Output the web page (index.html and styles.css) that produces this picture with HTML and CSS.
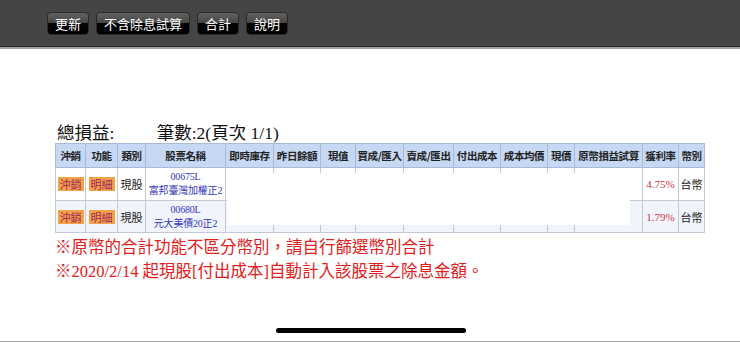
FILE: index.html
```html
<!DOCTYPE html>
<html lang="zh-TW">
<head>
    <meta charset="UTF-8">
    <meta name="viewport" content="width=device-width, initial-scale=1.0">
    <title>損益試算</title>
    <link rel="stylesheet" href="styles.css">
</head>
<body>
    <div class="toolbar">
        <button class="btn-tool">更新</button>
        <button class="btn-tool">不含除息試算</button>
        <button class="btn-tool">合計</button>
        <button class="btn-tool">說明</button>
    </div>

    <div class="content">
        <div class="summary">
            <span class="total">總損益:</span>
            <span class="count">筆數:2(頁次 1/1)</span>
        </div>

        <div class="table-wrap">
            <table class="grid">
                <thead>
                    <tr>
                        <th class="c1">沖銷</th>
                        <th class="c2">功能</th>
                        <th class="c3">類別</th>
                        <th class="c4">股票名稱</th>
                        <th class="c5">即時庫存</th>
                        <th class="c6">昨日餘額</th>
                        <th class="c7">現值</th>
                        <th class="c8">買成/匯入</th>
                        <th class="c9">賣成/匯出</th>
                        <th class="c10">付出成本</th>
                        <th class="c11">成本均價</th>
                        <th class="c12">現價</th>
                        <th class="c13">原幣損益試算</th>
                        <th class="c14">獲利率</th>
                        <th class="c15">幣別</th>
                    </tr>
                </thead>
                <tbody>
                    <tr class="row-odd">
                        <td><span class="tag">沖銷</span></td>
                        <td><span class="tag">明細</span></td>
                        <td>現股</td>
                        <td class="stock">00675L<br>富邦臺灣加權正2</td>
                        <td></td><td></td><td></td><td></td><td></td>
                        <td></td><td></td><td></td><td></td>
                        <td class="rate">4.75%</td>
                        <td>台幣</td>
                    </tr>
                    <tr class="row-even">
                        <td><span class="tag">沖銷</span></td>
                        <td><span class="tag">明細</span></td>
                        <td>現股</td>
                        <td class="stock">00680L<br>元大美債20正2</td>
                        <td></td><td></td><td></td><td></td><td></td>
                        <td></td><td></td><td></td><td></td>
                        <td class="rate">1.79%</td>
                        <td>台幣</td>
                    </tr>
                </tbody>
            </table>
            <!-- 遮蔽的數值區 -->
            <div class="mask"></div>
        </div>

        <div class="notes">
            <p>※原幣的合計功能不區分幣別，請自行篩選幣別合計</p>
            <p>※2020/2/14 起現股[付出成本]自動計入該股票之除息金額。</p>
        </div>
    </div>

    <div class="home-bar"></div>
</body>
</html>
```

FILE: styles.css
```css
* {
    margin: 0;
    padding: 0;
    box-sizing: border-box;
}

html, body {
    width: 740px;
    height: 342px;
    overflow: hidden;
    background-color: #fff;
    font-family: "Noto Sans CJK TC", sans-serif;
}

body {
    position: relative;
    border-bottom: 1px solid #aaa;
}

.toolbar {
    height: 47px;
    background-color: #454545;
    border-bottom: 1px solid #2a2a2a;
    box-shadow: 0 2px 0 #a0a0a0;
    display: flex;
    align-items: flex-start;
    gap: 7px;
    padding: 12px 0 0 47px;
}

.btn-tool {
    height: 23px;
    padding: 0 7px;
    border: 1px solid #2a2a2a;
    border-radius: 4px;
    background: linear-gradient(#626262, #444 50%, #050505 50%, #000);
    color: #fff;
    font-family: "Noto Sans CJK TC", sans-serif;
    font-size: 13px;
    line-height: 21px;
}

.content {
    padding: 75px 0 0 55px;
}

.summary {
    font-family: "Liberation Serif", "Noto Sans CJK TC", serif;
    font-size: 17.5px;
    line-height: 22px;
    color: #111;
    height: 21px;
    padding-left: 2px;
}

.count {
    margin-left: 38px;
}

.table-wrap {
    position: relative;
    width: 649px;
}

.grid {
    width: 649px;
    border-collapse: collapse;
    table-layout: fixed;
    font-size: 11px;
    color: #222;
}

.grid th, .grid td {
    border: 1px solid #c2c8d4;
    text-align: center;
    padding: 0;
    white-space: nowrap;
}

.grid th {
    height: 24px;
    background-color: #c6d8f3;
    border-color: #a9b9d6;
    font-weight: bold;
    font-size: 10.5px;
    letter-spacing: -0.4px;
}

.row-odd td {
    height: 33px;
    background-color: #fff;
}

.row-even td {
    height: 32px;
    background-color: #f1f5fb;
}

.c1 { width: 30px; }
.c2 { width: 32px; }
.c3 { width: 28px; }
.c4 { width: 80px; }
.c5 { width: 48px; }
.c6 { width: 47px; }
.c7 { width: 35px; }
.c8 { width: 48px; }
.c9 { width: 50px; }
.c10 { width: 47px; }
.c11 { width: 47px; }
.c12 { width: 27px; }
.c13 { width: 68px; }
.c14 { width: 36px; }
.c15 { width: 26px; }

.tag {
    display: inline-block;
    background-color: #f1a24a;
    color: #a3245c;
    padding: 1px 2px;
    line-height: 12px;
}

.stock {
    color: #3535b8;
    font-family: "Liberation Serif", "Noto Sans CJK TC", serif;
    font-size: 10px;
    line-height: 14px;
    letter-spacing: -0.2px;
}

.rate {
    color: #cc3344;
    font-family: "Liberation Serif", serif;
    font-size: 11px;
}

.mask {
    position: absolute;
    left: 172px;
    top: 30px;
    width: 403px;
    height: 52px;
    background-color: #fff;
}

.notes {
    padding-top: 3px;
    color: #e02020;
    font-family: "Liberation Serif", "Noto Sans CJK TC", serif;
    font-size: 16.5px;
    line-height: 24px;
}

.home-bar {
    position: absolute;
    left: 276px;
    bottom: 8px;
    width: 190px;
    height: 5px;
    border-radius: 3px;
    background-color: #000;
}
```
